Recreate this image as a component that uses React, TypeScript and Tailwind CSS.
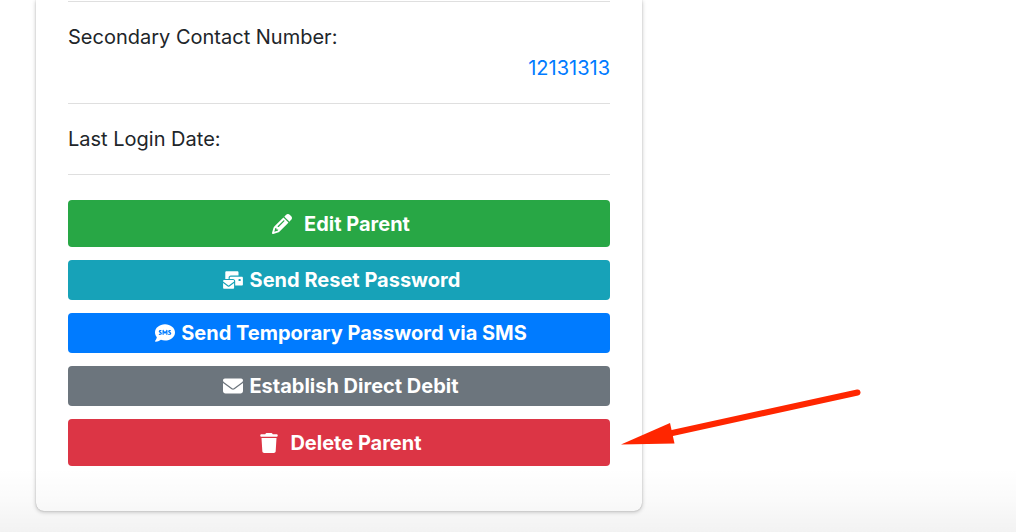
import type { ReactNode } from "react";
import { FaCommentSms, FaEnvelope, FaEnvelopesBulk, FaPencil, FaTrash } from "react-icons/fa6";

type ActionProps = {
  icon: ReactNode;
  label: string;
  className: string;
};

function Action({ icon, label, className }: ActionProps) {
  return (
    <button
      type="button"
      className={`flex w-full items-center justify-center rounded pl-1 text-[20px] leading-6 font-bold text-white ${className}`}
    >
      {icon}
      <span>{label}</span>
    </button>
  );
}

export default function App() {
  return (
    <div className="relative min-h-screen overflow-hidden bg-white font-['Inter','Liberation_Sans',sans-serif] text-[#212529]">
      <main className="mr-[374px] ml-9 rounded-b-lg bg-white px-8 pb-[45px] shadow-[0_0_1px_rgba(0,0,0,0.3),0_1px_4px_rgba(0,0,0,0.25)]">
        <dl className="pt-px text-[20px] leading-[31px]">
          <div className="border-t border-[#dfdfdf] pt-5 pb-[19px]">
            <dt>Secondary Contact Number:</dt>
            <dd className="text-right">
              <a href="tel:12131313" className="text-[#007bff]">
                12131313
              </a>
            </dd>
          </div>
          <div className="border-y border-[#dfdfdf] pt-5 pb-[19px]">
            <dt>Last Login Date:</dt>
          </div>
        </dl>
        <div className="mt-[25px] flex flex-col gap-[13px]">
          <Action
            icon={<FaPencil className="mr-3 size-5" />}
            label="Edit Parent"
            className="bg-[#28a745] pt-3 pb-[11px]"
          />
          <Action
            icon={<FaEnvelopesBulk className="mr-1.5 h-5 w-[22px]" />}
            label="Send Reset Password"
            className="bg-[#17a2b8] py-2"
          />
          <Action
            icon={<FaCommentSms className="mr-1.5 size-5" />}
            label="Send Temporary Password via SMS"
            className="bg-[#007bff] py-2"
          />
          <Action
            icon={<FaEnvelope className="mr-1.5 size-5" />}
            label="Establish Direct Debit"
            className="bg-[#6c757d] py-2"
          />
          <Action
            icon={<FaTrash className="mr-3 h-5 w-[18px]" />}
            label="Delete Parent"
            className="bg-[#dc3545] pt-3 pb-[11px]"
          />
        </div>
      </main>
      <div className="pointer-events-none absolute inset-x-0 bottom-0 h-16 bg-linear-to-b from-black/0 via-black/2 to-black/5" />
      <svg
        className="pointer-events-none absolute top-[380px] right-[146px]"
        width="250"
        height="76"
        viewBox="0 0 250 76"
        aria-hidden="true"
      >
        <path d="M50 53.5 237.500 12.500" stroke="#ff2600" strokeWidth="6" strokeLinecap="round" />
        <path d="M1 64.500 50 43 54.500 63.500Z" fill="#ff2600" />
      </svg>
    </div>
  );
}
